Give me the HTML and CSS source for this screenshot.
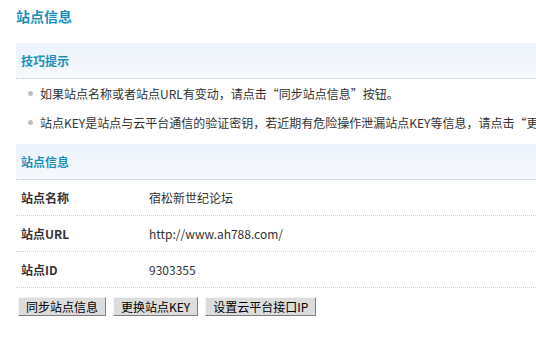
FILE: index.html
```html
<!DOCTYPE html>
<html lang="zh">
<head>
<meta charset="utf-8">
<title>站点信息</title>
<link rel="stylesheet" href="styles.css">
</head>
<body>
<div class="page">
  <h1 class="title">站点信息</h1>
  <div class="band">技巧提示</div>
  <ul class="tips">
    <li>如果站点名称或者站点URL有变动，请点击“同步站点信息”按钮。</li>
    <li>站点KEY是站点与云平台通信的验证密钥，若近期有危险操作泄漏站点KEY等信息，请点击“更换站点KEY”按钮。</li>
  </ul>
  <div class="band">站点信息</div>
  <div class="row"><span class="label">站点名称</span><span class="value">宿松新世纪论坛</span></div>
  <div class="row"><span class="label">站点URL</span><span class="value">http://www.ah788.com/</span></div>
  <div class="row"><span class="label">站点ID</span><span class="value">9303355</span></div>
  <div class="buttons">
    <button class="btn">同步站点信息</button>
    <button class="btn">更换站点KEY</button>
    <button class="btn">设置云平台接口IP</button>
  </div>
</div>
</body>
</html>
```

FILE: styles.css
```css
html, body {
  margin: 0;
  padding: 0;
  background: #fff;
  overflow: hidden;
}
body {
  font-family: "Noto Sans CJK SC", "DejaVu Sans", sans-serif;
  font-size: 12px;
  color: #333;
}
.page {
  padding: 7px 0 0 16px;
  white-space: nowrap;
  overflow: hidden;
}
.title {
  margin: 0;
  font-size: 14px;
  line-height: 18px;
  font-weight: bold;
  color: #1a8fbc;
  height: 36px;
}
.band {
  height: 35px;
  line-height: 35px;
  padding-left: 5px;
  font-weight: bold;
  color: #1a8fbc;
  background: linear-gradient(#ecf3fb, #f6f9fd);
  border-bottom: 1px dotted #c8c8c8;
}
.tips {
  list-style: none;
  margin: 0;
  padding: 0 0 7px 12px;
}
.tips li {
  height: 29px;
  line-height: 29px;
  display: flex;
  align-items: center;
  gap: 7px;
}
.tips li::before {
  content: "";
  flex: 0 0 5px;
  width: 5px;
  height: 5px;
  border-radius: 50%;
  background: #c0c0c0;
}
.row {
  display: flex;
  height: 35px;
  line-height: 35px;
  border-bottom: 1px dotted #d0d0d0;
}
.label {
  width: 128px;
  padding-left: 5px;
  font-weight: bold;
  color: #333;
}
.value {
  color: #333;
}
.buttons {
  display: flex;
  gap: 7px;
  padding: 9px 0 0 2px;
}
.btn {
  font-family: "Noto Sans CJK SC", "DejaVu Sans", sans-serif;
  font-size: 12px;
  line-height: 15px;
  height: 19px;
  padding: 0 7px;
  color: #000;
  background: #dcdcdc;
  border: 1px solid;
  border-color: #f4f4f4 #808080 #808080 #f4f4f4;
  border-radius: 0;
}
```
